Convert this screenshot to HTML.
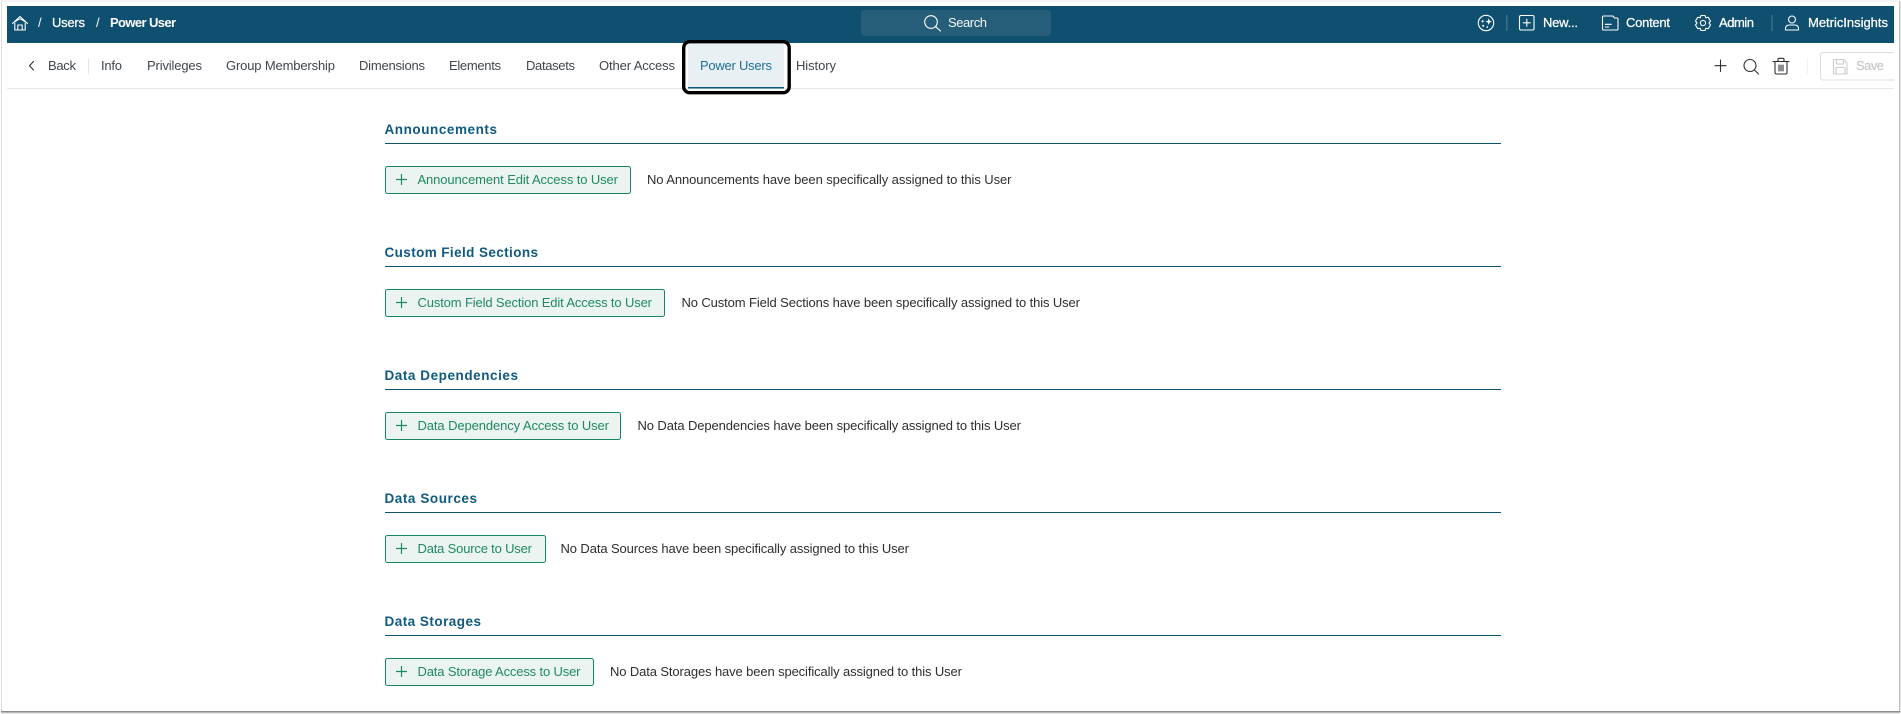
<!DOCTYPE html>
<html lang="en">
<head>
<meta charset="utf-8">
<title>Users / Power User</title>
<style>
html,body{margin:0;padding:0;width:1901px;height:714px;overflow:hidden;background:#fff}
svg{display:block}
text{font-family:"Liberation Sans",sans-serif;font-size:13px}
.w{fill:#f4f8fa}
.wb{fill:#fff;stroke:#fff;stroke-width:.25px}
.wbb{fill:#fff;font-weight:700}
.n{fill:#3f464d}
.t{fill:#0f5a80;font-weight:700;font-size:13.5px}
.b{fill:#1f8a62}
.m{fill:#2e2e2e}
.si{fill:none;stroke:#fff;stroke-width:1.1;stroke-linejoin:round;stroke-linecap:round}
.di{fill:none;stroke:#2b2f33;stroke-width:1.1;stroke-linejoin:round;stroke-linecap:round}
.fl{fill:none;stroke:#ccc;stroke-width:1.1;stroke-linejoin:round}
.bx{fill:#ebf4f0;stroke:#16875f;stroke-width:1}
.pl{stroke:#1f8a62;stroke-width:1.2;fill:none}
</style>
</head>
<body>
<svg width="1901" height="714" viewBox="0 0 1901 714" xmlns="http://www.w3.org/2000/svg">
<!-- frame -->
<rect x="0" y="0" width="1901" height="714" fill="#fff"/>
<rect x="1" y="1" width="1" height="711" fill="#dcdcdc"/>
<rect x="1" y="0.5" width="1899" height="1" fill="#e8e8e8"/>
<rect x="1899" y="1" width="1.5" height="711" fill="#c4c4c4"/>
<rect x="1" y="711" width="1899" height="1.5" fill="#8f8f8f"/>
<rect x="1" y="712.5" width="1899" height="1" fill="#dcdcdc"/>

<!-- top bar -->
<rect x="7" y="6" width="1887" height="37" fill="#0f4f70"/>
<path class="si" d="M12.5 23.500 20 16.500l7.500 7M15 21.500 20 18.700l5 2.800M14.800 23v7h10.400v-7M17.800 30v-5h4.400v5"/>
<text class="w" x="38" y="27" textLength="5">/</text>
<text class="wb" x="52" y="27" textLength="33">Users</text>
<text class="w" x="96" y="27" textLength="5">/</text>
<text class="wbb" x="110" y="27" textLength="66">Power User</text>

<rect x="861" y="10" width="190" height="26" rx="3" fill="#265d79"/>
<circle cx="931" cy="22" r="6.300" class="si"/><path class="si" d="M935.700 26.700 940.500 31"/>
<text class="w" x="948" y="27" textLength="39">Search</text>

<circle cx="1486" cy="23" r="7.700" class="si"/>
<path d="M1488.700 18.300l.9 2.400 2.400.9-2.400.9-.9 2.400-.9-2.400-2.400-.9 2.400-.9z" fill="#fff"/>
<path d="M1482.700 19.500l.5 1.300 1.300.5-1.300.5-.5 1.300-.5-1.300-1.300-.5 1.300-.5z" fill="#fff"/>
<circle cx="1483.200" cy="25.800" r="1" fill="#fff"/><circle cx="1487.300" cy="27" r=".9" fill="#fff"/>
<rect x="1506.300" y="15" width="1" height="16" fill="#4f7f98"/>
<rect x="1519.500" y="15.500" width="14.500" height="14.500" rx="1.500" class="si"/>
<path class="si" d="M1526.800 19.300v7M1523.300 22.800h7"/>
<text class="wb" x="1543" y="27" textLength="35">New...</text>
<path class="si" d="M1602.500 17v12a1 1 0 0 0 1 1h13.500a1 1 0 0 0 1-1V19a1 1 0 0 0-1-1h-2.500l-1.500-2h-9.500a1 1 0 0 0-1 1zM1605.300 24.300h6M1605.300 27h3.500"/>
<text class="wb" x="1626" y="27" textLength="44">Content</text>
<g transform="translate(1703 23)"><path class="si" d="M-2-7.500H2l.8 2.200 2.400-.4 2.300 3.700L6 0l1.500 2-2.300 3.700-2.400-.4L2 7.500h-4l-.8-2.200-2.400.4L-7.500 2-6 0l-1.500-2 2.300-3.700 2.400.4z"/><circle r="2.600" class="si"/></g>
<text class="wb" x="1719" y="27" textLength="35">Admin</text>
<rect x="1771.500" y="15" width="1" height="16" fill="#4f7f98"/>
<circle cx="1792" cy="19.500" r="3.500" class="si"/>
<path class="si" d="M1785.500 30v-1.500a3.500 3.500 0 0 1 3.500-3.500h6a3.500 3.500 0 0 1 3.500 3.500V30z"/>
<text class="wb" x="1808" y="27" textLength="80">MetricInsights</text>

<!-- nav -->
<rect x="7" y="88" width="1887" height="1" fill="#e8e8e8"/>
<path class="di" d="M33.500 61.500 29.500 65.800l4 4.200"/>
<text class="n" x="48" y="70" textLength="28">Back</text>
<rect x="88" y="58" width="1" height="16" fill="#e4e4e4"/>
<text class="n" x="101" y="70" textLength="21">Info</text>
<text class="n" x="147" y="70" textLength="55">Privileges</text>
<text class="n" x="226" y="70" textLength="109">Group Membership</text>
<text class="n" x="359" y="70" textLength="66">Dimensions</text>
<text class="n" x="449" y="70" textLength="52">Elements</text>
<text class="n" x="526" y="70" textLength="49">Datasets</text>
<text class="n" x="599" y="70" textLength="76">Other Access</text>
<rect x="688" y="43" width="96" height="45" fill="#e9f0f3"/>
<rect x="688" y="87" width="96" height="1.500" fill="#0f5a80"/>
<rect x="683.700" y="41.700" width="105.500" height="51" rx="6" fill="none" stroke="#000" stroke-width="3.400"/>
<text fill="#1f6f96" x="700" y="70" textLength="72">Power Users</text>
<text class="n" x="796" y="70" textLength="40">History</text>

<path class="di" d="M1720.500 60v11.500M1715 65.700h11"/>
<circle cx="1750" cy="65.500" r="6" class="di"/><path class="di" d="M1754.500 70 1758.500 74"/>
<path class="di" d="M1773 61.500h16M1778 61.500v-2a1.200 1.200 0 0 1 1.200-1.200h3.600a1.200 1.200 0 0 1 1.200 1.200v2M1775 61.500v11a1.500 1.500 0 0 0 1.500 1.500h9a1.500 1.500 0 0 0 1.500-1.500v-11M1779 65v6M1781 65v6M1783 65v6"/>
<rect x="1807" y="58" width="1" height="16" fill="#f0f0f0"/>
<path d="M1894 52.500h-71a2.500 2.500 0 0 0-2.500 2.500v22.500a2.500 2.500 0 0 0 2.500 2.500h71" fill="none" stroke="#dcdcdc" stroke-width="1"/>
<path class="fl" d="M1833.500 60.500a1 1 0 0 1 1-1h9l3.500 3.500v10a1 1 0 0 1-1 1h-11.500a1 1 0 0 1-1-1zM1836.500 59.500v4.500h7v-4.500M1836 73.500v-6h9v6"/>
<text fill="#c8c8c8" stroke="#c8c8c8" stroke-width=".2" x="1856" y="70" textLength="28">Save</text>

<!-- Announcements -->
<text class="t" x="384.500" y="134" textLength="112.500">Announcements</text>
<rect x="385" y="143" width="1116" height="1" fill="#0f5270"/>
<rect x="385.500" y="166.500" width="245" height="27" rx="2" class="bx"/>
<path class="pl" d="M401.500 174v11M396 179.500h11"/>
<text class="b" x="417.500" y="184" textLength="200.500">Announcement Edit Access to User</text>
<text class="m" x="647" y="184" textLength="364.500">No Announcements have been specifically assigned to this User</text>

<!-- Custom Field Sections -->
<text class="t" x="384.500" y="257" textLength="153.500">Custom Field Sections</text>
<rect x="385" y="266" width="1116" height="1" fill="#0f5270"/>
<rect x="385.500" y="289.500" width="279" height="27" rx="2" class="bx"/>
<path class="pl" d="M401.500 297v11M396 302.500h11"/>
<text class="b" x="417.500" y="307" textLength="234.500">Custom Field Section Edit Access to User</text>
<text class="m" x="681.500" y="307" textLength="398.500">No Custom Field Sections have been specifically assigned to this User</text>

<!-- Data Dependencies -->
<text class="t" x="384.500" y="380" textLength="133.500">Data Dependencies</text>
<rect x="385" y="389" width="1116" height="1" fill="#0f5270"/>
<rect x="385.500" y="412.500" width="235" height="27" rx="2" class="bx"/>
<path class="pl" d="M401.500 420v11M396 425.500h11"/>
<text class="b" x="417.500" y="430" textLength="191.500">Data Dependency Access to User</text>
<text class="m" x="637.500" y="430" textLength="383.500">No Data Dependencies have been specifically assigned to this User</text>

<!-- Data Sources -->
<text class="t" x="384.500" y="503" textLength="92.500">Data Sources</text>
<rect x="385" y="512" width="1116" height="1" fill="#0f5270"/>
<rect x="385.500" y="535.500" width="160" height="27" rx="2" class="bx"/>
<path class="pl" d="M401.500 543v11M396 548.500h11"/>
<text class="b" x="417.500" y="553" textLength="114.500">Data Source to User</text>
<text class="m" x="560.500" y="553" textLength="348.500">No Data Sources have been specifically assigned to this User</text>

<!-- Data Storages -->
<text class="t" x="384.500" y="626" textLength="96.500">Data Storages</text>
<rect x="385" y="635" width="1116" height="1" fill="#0f5270"/>
<rect x="385.500" y="658.500" width="208" height="27" rx="2" class="bx"/>
<path class="pl" d="M401.500 666v11M396 671.500h11"/>
<text class="b" x="417.500" y="676" textLength="163">Data Storage Access to User</text>
<text class="m" x="610" y="676" textLength="352">No Data Storages have been specifically assigned to this User</text>
</svg>
</body>
</html>
